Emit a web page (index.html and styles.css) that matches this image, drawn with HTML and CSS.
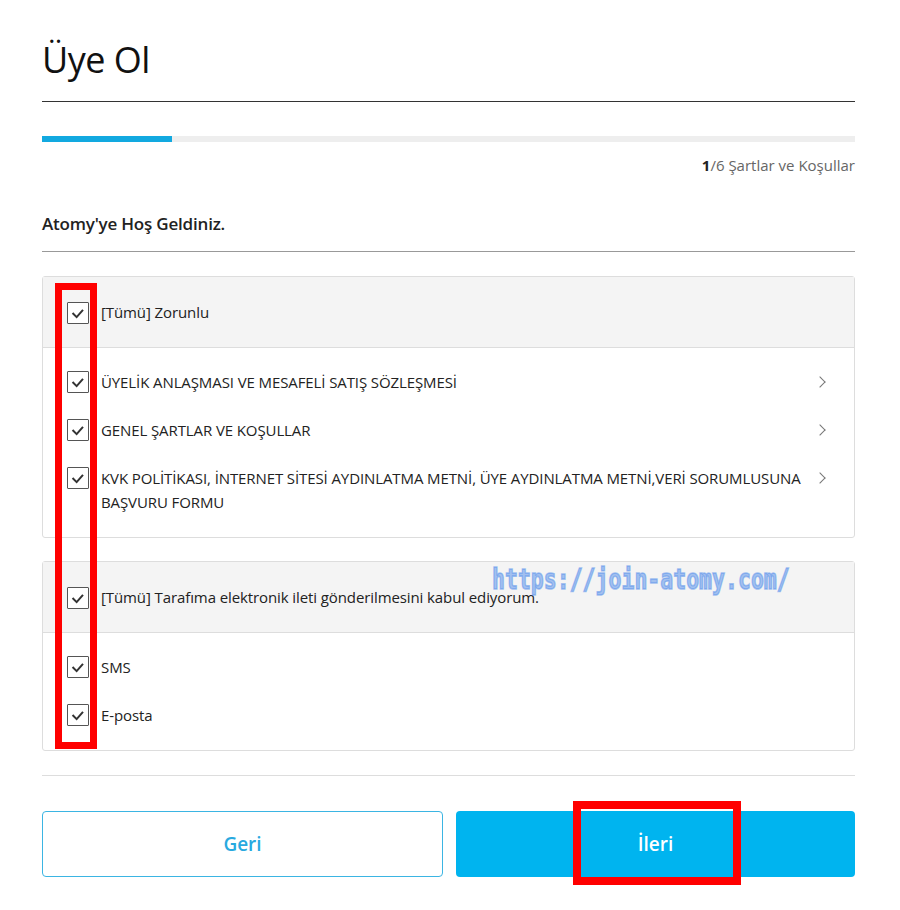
FILE: index.html
```html
<!DOCTYPE html>
<html lang="tr">
<head>
  <meta charset="UTF-8" />
  <meta name="viewport" content="width=device-width, initial-scale=1.0"/>
  <title>Üye Ol - Atomy</title>
  <link rel="stylesheet" href="styles.css">
</head>
<body>

  <div class="page">
    <h1 class="page-title">Üye Ol</h1>

    <div class="progress">
      <div class="progress-fill"></div>
    </div>
    <p class="step"><b>1</b>/6 Şartlar ve Koşullar</p>

    <h2 class="welcome">Atomy'ye Hoş Geldiniz.</h2>

    <div class="terms">
      <div class="terms-head">
        <span class="check"><svg viewBox="0 0 22 22"><polyline points="5,11 9.5,15.5 16.5,7.5"/></svg></span>
        <span>[Tümü] Zorunlu</span>
      </div>
      <ul class="terms-list">
        <li>
          <span class="check"><svg viewBox="0 0 22 22"><polyline points="5,11 9.5,15.5 16.5,7.5"/></svg></span>
          <span class="label">ÜYELİK ANLAŞMASI VE MESAFELİ SATIŞ SÖZLEŞMESİ</span>
          <span class="arrow"></span>
        </li>
        <li>
          <span class="check"><svg viewBox="0 0 22 22"><polyline points="5,11 9.5,15.5 16.5,7.5"/></svg></span>
          <span class="label">GENEL ŞARTLAR VE KOŞULLAR</span>
          <span class="arrow"></span>
        </li>
        <li>
          <span class="check"><svg viewBox="0 0 22 22"><polyline points="5,11 9.5,15.5 16.5,7.5"/></svg></span>
          <span class="label">KVK POLİTİKASI, İNTERNET SİTESİ AYDINLATMA METNİ, ÜYE AYDINLATMA METNİ,VERİ SORUMLUSUNA BAŞVURU FORMU</span>
          <span class="arrow"></span>
        </li>
      </ul>
    </div>

    <div class="terms">
      <div class="terms-head">
        <span class="check"><svg viewBox="0 0 22 22"><polyline points="5,11 9.5,15.5 16.5,7.5"/></svg></span>
        <span>[Tümü] Tarafıma elektronik ileti gönderilmesini kabul ediyorum.</span>
      </div>
      <ul class="terms-list">
        <li>
          <span class="check"><svg viewBox="0 0 22 22"><polyline points="5,11 9.5,15.5 16.5,7.5"/></svg></span>
          <span class="label">SMS</span>
        </li>
        <li>
          <span class="check"><svg viewBox="0 0 22 22"><polyline points="5,11 9.5,15.5 16.5,7.5"/></svg></span>
          <span class="label">E-posta</span>
        </li>
      </ul>
    </div>

    <div class="actions">
      <button class="btn btn-back">Geri</button>
      <button class="btn btn-next">İleri<span class="mark mark-next"></span></button>
    </div>

    <!-- screenshot annotations -->
    <span class="mark mark-checks"></span>
    <span class="watermark">https://join-atomy.com/</span>
  </div>

</body>
</html>
```

FILE: styles.css
```css
body {
  margin: 0;
  font-family: 'Open Sans', 'Noto Sans', sans-serif;
  background: #fff;
  color: #222;
}

.page {
  position: relative;
  padding: 29px 45px 34px 42px;
}

.page-title {
  margin: 0;
  padding-bottom: 10px;
  font-size: 36px;
  font-weight: 500;
  line-height: 62px;
  color: #111;
  letter-spacing: -0.5px;
  border-bottom: 1px solid #333;
}

.progress {
  margin-top: 34px;
  height: 6px;
  background: #eee;
}

.progress-fill {
  width: 16%;
  height: 100%;
  background: #12a9e0;
}

.step {
  margin: 13px 0 0;
  text-align: right;
  font-size: 15px;
  line-height: 20px;
  color: #666;
}

.step b {
  color: #222;
}

.welcome {
  margin: 37px 0 0;
  padding-bottom: 15px;
  font-size: 17px;
  font-weight: 600;
  line-height: 24px;
  letter-spacing: -0.2px;
  border-bottom: 1px solid #999;
}

.terms {
  margin-top: 24px;
  border: 1px solid #ddd;
  border-radius: 3px;
  font-size: 15px;
  letter-spacing: -0.1px;
}

.terms + .terms {
  margin-top: 23px;
}

.terms-head {
  display: flex;
  align-items: center;
  gap: 12px;
  height: 70px;
  padding: 0 24px;
  background: #f4f4f4;
  border-bottom: 1px solid #ddd;
}

.terms-list {
  list-style: none;
  margin: 0;
  padding: 22px 28px 23px 24px;
  display: flex;
  flex-direction: column;
  gap: 24px;
}

.terms-list li {
  display: flex;
  align-items: flex-start;
  gap: 12px;
  line-height: 24px;
}

.label {
  flex: 1;
}

.check {
  flex: none;
  width: 22px;
  height: 22px;
  margin-top: 1px;
  box-sizing: border-box;
  border: 1px solid #555;
  border-radius: 1px;
  background: #fff;
}

.check svg {
  display: block;
  width: 20px;
  height: 20px;
  fill: none;
  stroke: #333;
  stroke-width: 2.2;
}

.arrow {
  flex: none;
  width: 7px;
  height: 7px;
  margin: 8px 2px 0 0;
  border-top: 1.5px solid #777;
  border-right: 1.5px solid #777;
  transform: rotate(45deg);
}

.actions {
  display: flex;
  gap: 13px;
  margin-top: 24px;
  padding-top: 35px;
  border-top: 1px solid #ddd;
}

.btn {
  flex: 1;
  height: 66px;
  border-radius: 4px;
  font-family: inherit;
  font-size: 19px;
  font-weight: 600;
  cursor: pointer;
}

.btn-back {
  background: #fff;
  border: 1px solid #3bb5e3;
  color: #29a9df;
}

.btn-next {
  position: relative;
  background: #00b4ef;
  border: none;
  color: #fff;
}

.mark {
  position: absolute;
  box-sizing: border-box;
  border: 8px solid #f00;
}

.mark-next {
  left: 117px;
  top: -10px;
  width: 168px;
  height: 84px;
}

.mark-checks {
  left: 55px;
  top: 283px;
  width: 42px;
  height: 466px;
  border-width: 7px;
}

.watermark {
  position: absolute;
  left: 492px;
  top: 562px;
  font-family: 'DejaVu Sans Mono', monospace;
  font-size: 21.5px;
  font-weight: bold;
  color: rgba(80, 140, 235, 0.5);
  -webkit-text-stroke: 1.2px rgba(80, 140, 235, 0.5);
  transform: scaleY(1.35);
  transform-origin: top left;
}
```
